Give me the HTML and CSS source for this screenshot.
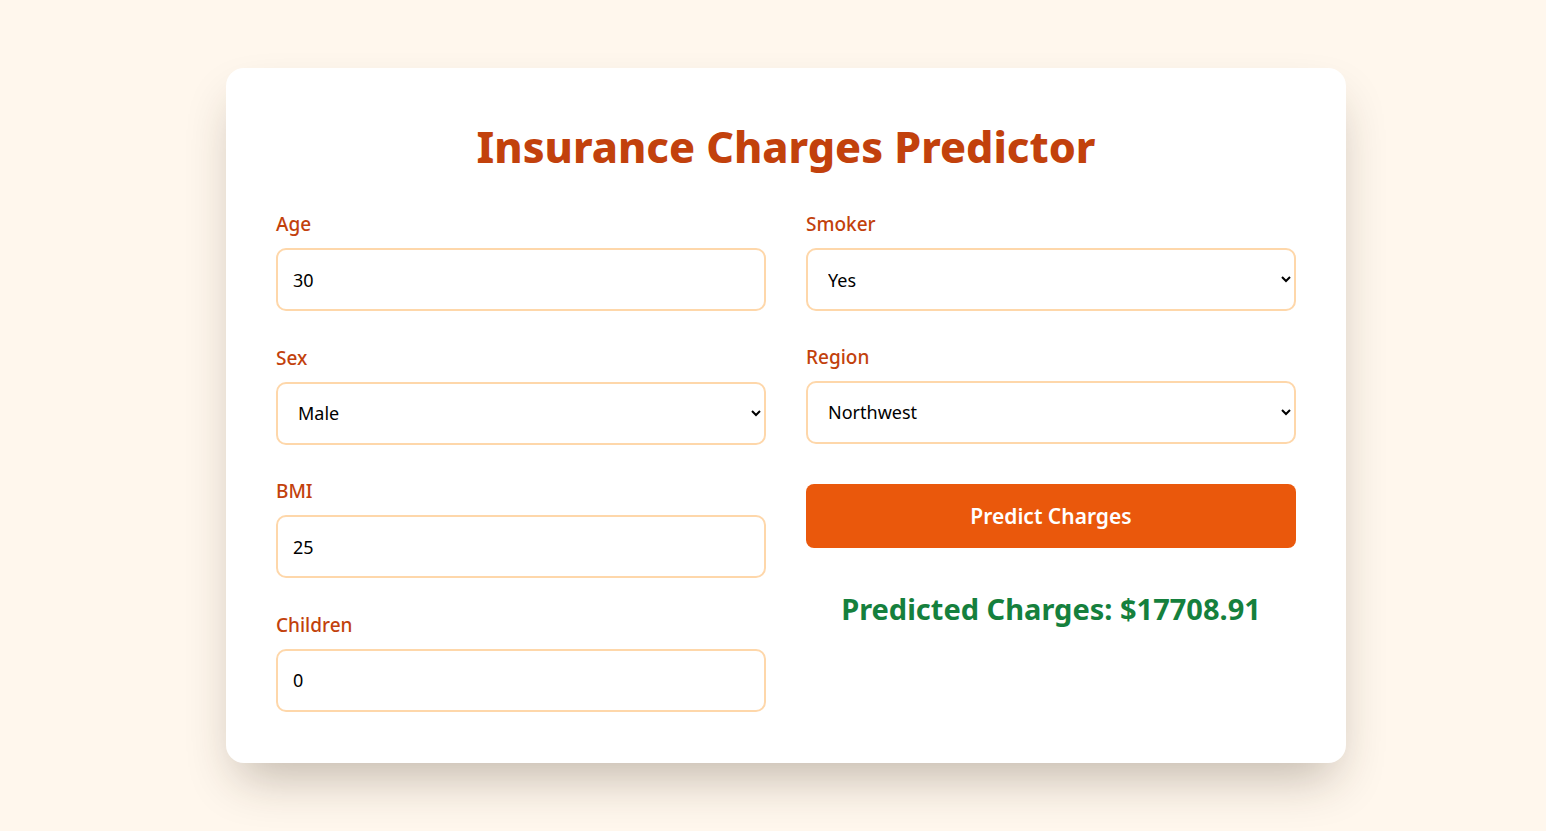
FILE: index.html
```html
<!DOCTYPE html>
<html lang="en">
<head>
<meta charset="utf-8">
<title>Insurance Charges Predictor</title>
<link rel="stylesheet" href="styles.css">
</head>
<body>
<main class="page">
  <section class="card">
    <h1 class="title">Insurance Charges Predictor</h1>
    <div class="grid">
      <div class="col">
        <div class="field">
          <label class="label" for="age">Age</label>
          <input class="control" id="age" type="number" value="30">
        </div>
        <div class="field">
          <label class="label" for="sex">Sex</label>
          <select class="control select" id="sex"><option>Male</option><option>Female</option></select>
        </div>
        <div class="field">
          <label class="label" for="bmi">BMI</label>
          <input class="control" id="bmi" type="number" value="25">
        </div>
        <div class="field">
          <label class="label" for="children">Children</label>
          <input class="control" id="children" type="number" value="0">
        </div>
      </div>
      <div class="col col-right">
        <div class="field">
          <label class="label" for="smoker">Smoker</label>
          <select class="control select" id="smoker"><option>Yes</option><option>No</option></select>
        </div>
        <div class="field">
          <label class="label" for="region">Region</label>
          <select class="control select" id="region"><option>Northwest</option><option>Northeast</option><option>Southwest</option><option>Southeast</option></select>
        </div>
        <button class="btn" type="button">Predict Charges</button>
        <p class="result">Predicted Charges: $17708.91</p>
      </div>
    </div>
  </section>
</main>
</body>
</html>
```

FILE: styles.css
```css
* { box-sizing: border-box; }
html, body { margin: 0; padding: 0; }
body {
  background: #fff7ed;
  font-family: "Noto Sans", "Open Sans", sans-serif;
  min-height: 831px;
}
.page {
  padding: 68px 0 0 226px;
}
.card {
  width: 1120px;
  background: #ffffff;
  border-radius: 18px;
  padding: 50px 50px 51px;
  box-shadow: 0 25px 50px -12px rgba(50, 35, 20, 0.3);
}
.title {
  margin: 0 0 36px;
  text-align: center;
  color: #c2410c;
  font-size: 43px;
  font-weight: 800;
  line-height: 58px;
  letter-spacing: 0;
}
.grid {
  display: grid;
  grid-template-columns: 1fr 1fr;
  column-gap: 40px;
}
.col {
  display: flex;
  flex-direction: column;
}
.field {
  display: flex;
  flex-direction: column;
  margin-bottom: 34.5px;
}
.col-right .field { margin-bottom: 33.5px; }
.field:last-child { margin-bottom: 0; }
.label {
  color: #c2410c;
  font-size: 19px;
  font-weight: 500;
  line-height: 24px;
  margin-bottom: 12px;
}
.control {
  height: 63px;
  border: 2px solid #fed7aa;
  border-radius: 10px;
  background: #fff;
  font-family: inherit;
  font-size: 18px;
  color: #000;
  padding: 0 15px;
  outline: none;
}
.select {
  padding-left: 16px;
  padding-right: 8px;
}
.btn {
  margin-top: 7px;
  height: 64px;
  border: 0;
  border-radius: 8px;
  background: #ea580c;
  color: #fff;
  font-family: inherit;
  font-size: 21px;
  font-weight: 600;
}
.result {
  margin: 41px 0 0;
  text-align: center;
  color: #15803d;
  font-size: 29px;
  font-weight: 700;
  line-height: 40px;
}
```
